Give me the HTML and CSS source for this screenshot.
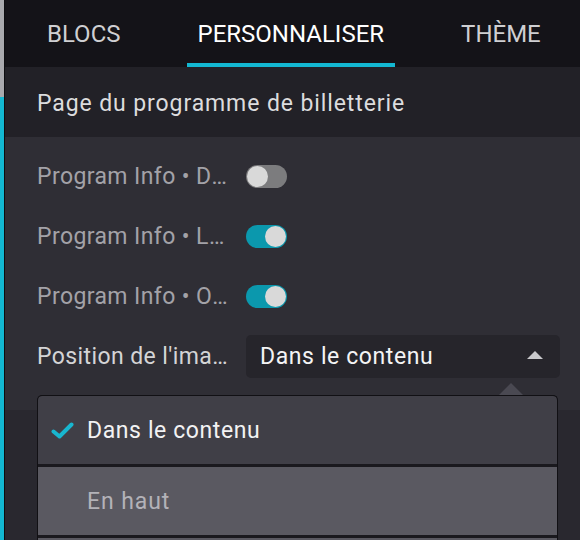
FILE: index.html
```html
<!DOCTYPE html>
<html lang="fr">
<head>
<meta charset="utf-8">
<title>Personnaliser</title>
<link rel="stylesheet" href="styles.css">
</head>
<body>
<div class="app">
  <div class="strip"><div class="strip-top"></div><div class="strip-bottom"></div></div>
  <div class="edge"></div>
  <div class="panel">
    <nav class="tabs">
      <div class="tab">BLOCS</div>
      <div class="tab active">PERSONNALISER</div>
      <div class="tab">THÈME</div>
    </nav>
    <div class="header">Page du programme de billetterie</div>
    <div class="content">
      <div class="row">
        <div class="label dim">Program Info • Date et heure</div>
        <div class="toggle off"><span class="knob"></span></div>
      </div>
      <div class="row">
        <div class="label dim">Program Info • Localisation</div>
        <div class="toggle on"><span class="knob"></span></div>
      </div>
      <div class="row">
        <div class="label dim">Program Info • Organisateur</div>
        <div class="toggle on"><span class="knob"></span></div>
      </div>
      <div class="row">
        <div class="label">Position de l'image</div>
        <div class="select">
          <span class="select-value">Dans le contenu</span>
          <span class="caret"></span>
        </div>
      </div>
    </div>
    <div class="below"></div>
  </div>
  <span class="pointer"></span>
  <div class="dropdown">
    <div class="option selected">
      <svg class="check" width="23" height="17" viewBox="0 0 23 17"><path d="M2.5 9.5 L8.5 14.5 L20.5 2.5" fill="none" stroke="#18b6cf" stroke-width="4" stroke-linecap="round" stroke-linejoin="round"/></svg>
      <span>Dans le contenu</span>
    </div>
    <div class="option">En haut</div>
    <div class="option"></div>
  </div>
</div>
</body>
</html>
```
FILE: styles.css
```css
* { box-sizing: border-box; }
html, body { margin: 0; padding: 0; }
body {
  width: 580px;
  height: 540px;
  overflow: hidden;
  background: #29282f;
  font-family: Roboto, "Liberation Sans", sans-serif;
}
.app {
  position: relative;
  display: flex;
  height: 540px;
  overflow: hidden;
}
.strip {
  width: 4px;
  display: flex;
  flex-direction: column;
}
.strip-top { height: 97px; background: #a9a9ad; }
.strip-bottom { flex: 1; background: #13b8d2; }
.edge { width: 1px; background: #0d0d10; }
.panel {
  flex: 1;
  display: flex;
  flex-direction: column;
}
.tabs {
  height: 67px;
  background: #141318;
  display: flex;
  align-items: stretch;
  gap: 55px;
  padding-left: 31px;
}
.tab {
  padding: 4px 11px 0;
  display: flex;
  align-items: center;
  font-size: 24px;
  color: #cfcfd2;
  border-bottom: 4px solid transparent;
}
.tab.active {
  color: #ffffff;
  border-bottom-color: #13b8d2;
}
.header {
  height: 70px;
  background: #222127;
  display: flex;
  align-items: center;
  padding: 3px 0 0 32px;
  font-size: 23px;
  letter-spacing: 0.9px;
  color: #dcdcde;
}
.content {
  background: #2f2e35;
  padding: 9px 20px 24px 32px;
}
.row {
  height: 60px;
  display: flex;
  align-items: center;
  gap: 14px;
}
.label {
  width: 195px;
  flex: none;
  white-space: nowrap;
  overflow: hidden;
  text-overflow: ellipsis;
  font-size: 23px;
  letter-spacing: 0.4px;
  color: #d4d4d6;
}
.label.dim { color: #a3a2a8; }
.toggle {
  width: 41px;
  height: 23px;
  border-radius: 12px;
  padding: 1px;
  display: flex;
}
.toggle.off { background: #7c7c7e; justify-content: flex-start; }
.toggle.on { background: #0b98ad; justify-content: flex-end; }
.knob {
  width: 21px;
  height: 21px;
  border-radius: 50%;
  background: #d9d9d9;
}
.select {
  flex: 1;
  height: 43px;
  border-radius: 5px;
  background: #26252b;
  display: flex;
  align-items: center;
  justify-content: space-between;
  padding: 0 17px 0 14px;
  font-size: 23px;
  letter-spacing: 0.6px;
  color: #f4f4f5;
}
.caret {
  width: 0;
  height: 0;
  border-left: 8px solid transparent;
  border-right: 8px solid transparent;
  border-bottom: 8px solid #c9c9cc;
  margin-top: -2px;
}
.below { flex: 1; background: #29282f; }
.pointer {
  position: absolute;
  left: 498px;
  top: 383px;
  width: 0;
  height: 0;
  border-left: 13px solid transparent;
  border-right: 13px solid transparent;
  border-bottom: 13px solid #4a4952;
}
.dropdown {
  position: absolute;
  left: 37px;
  top: 395px;
  bottom: 0;
  width: 521px;
  overflow: hidden;
  border: 1px solid #111014;
  border-bottom: none;
  border-radius: 5px 5px 0 0;
  background: #1a191e;
  display: flex;
  flex-direction: column;
  gap: 3px;
}
.option {
  height: 68px;
  flex: none;
  display: flex;
  align-items: center;
  padding-left: 49px;
  background: #5a5961;
  font-size: 23px;
  letter-spacing: 0.9px;
  color: #b3b2b8;
}
.option:first-child { border-radius: 4px 4px 0 0; }
.option.selected {
  background: #403f47;
  color: #f2f2f3;
  letter-spacing: 0.6px;
  padding-left: 13px;
  gap: 13px;
}
.check { flex: none; }
```
